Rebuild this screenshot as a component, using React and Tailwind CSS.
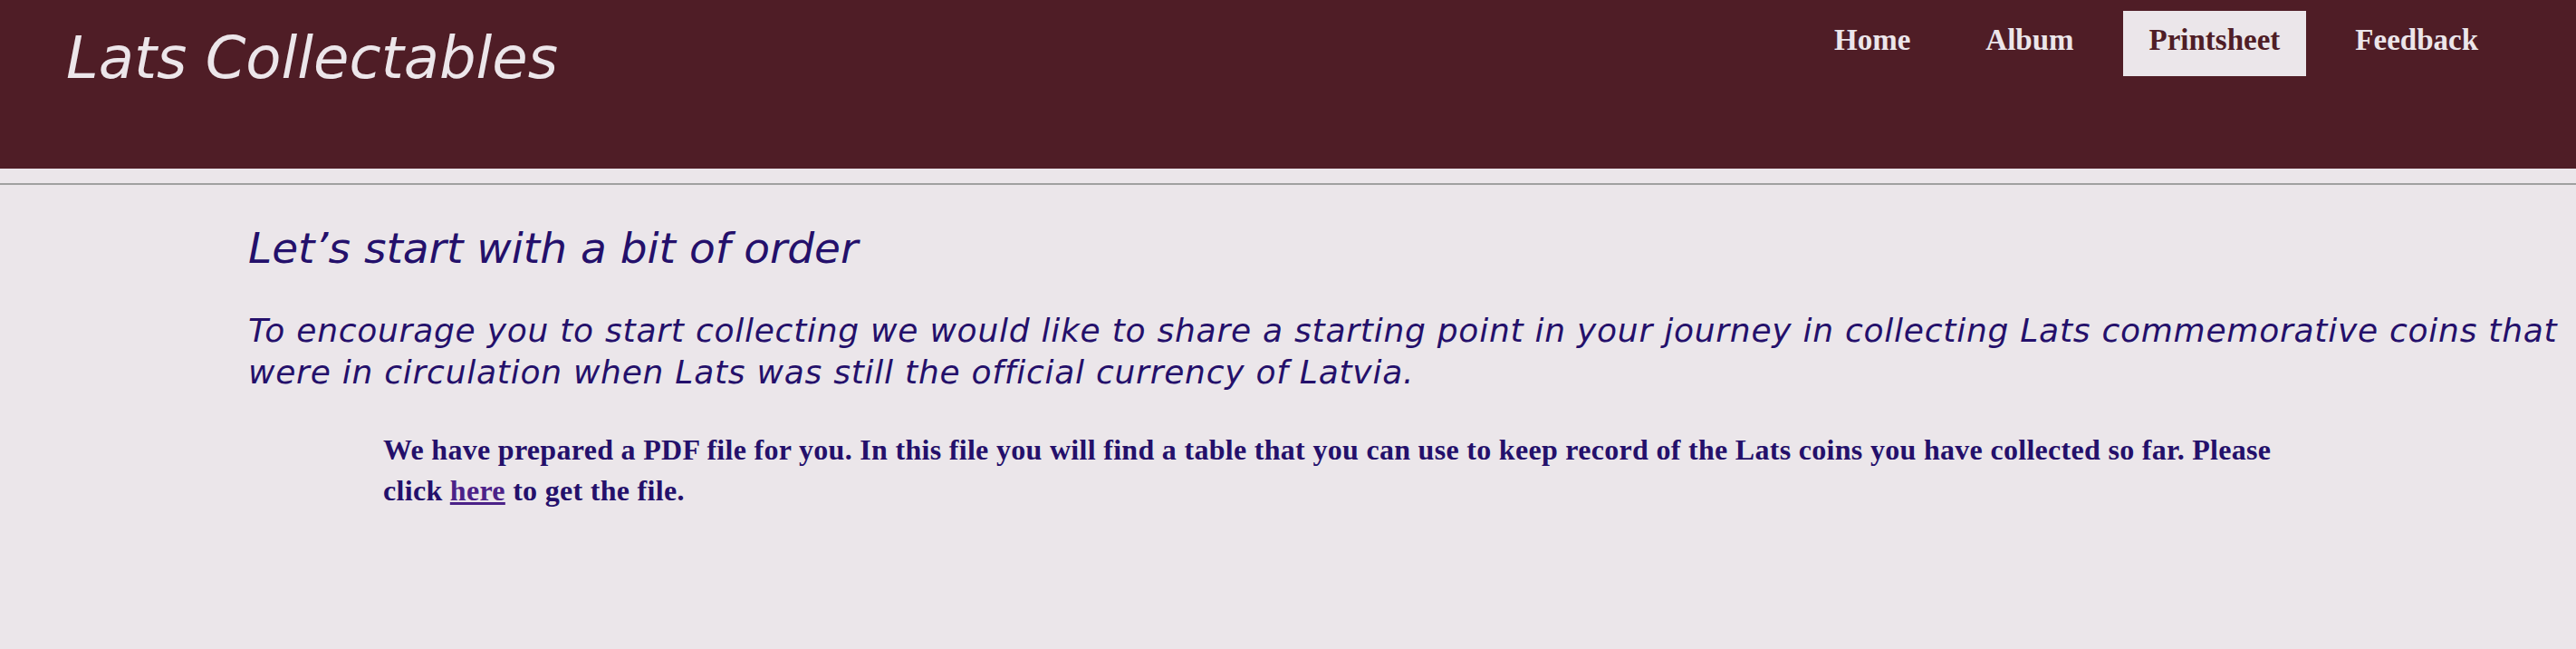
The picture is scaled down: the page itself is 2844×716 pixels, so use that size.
const navItems = ['Home', 'Album', 'Printsheet', 'Feedback'];

const NavLink = ({ label, active = false }) => {
  return (
    <a
      href="#"
      className={`
        block h-[72px] px-[29px] pt-[12px] leading-[40px] text-[33px] font-bold
        ${active ? 'bg-[#ebe6ea] text-[#4f1d26]' : 'text-[#ece6ea]'}
      `}
    >
      {label}
    </a>
  );
};

const Header = () => {
  return (
    <header className="flex h-[186px] justify-between bg-[#4f1d26]">
      <h1 className="pl-[73px] pt-[32px] text-[64px] leading-none italic font-normal text-[#ece6ea] font-['DejaVu_Sans',sans-serif]">
        Lats Collectables
      </h1>
      <nav className="flex gap-[25px] pr-[79px] pt-[12px] font-['Liberation_Serif',serif]">
        {navItems.map((item) => (
          <NavLink key={item} label={item} active={item === 'Printsheet'} />
        ))}
      </nav>
    </header>
  );
};

export default function App() {
  return (
    <div className="min-h-[716px] bg-[#ebe6ea]">
      <Header />
      <hr className="mt-[16px] border-0 border-t-2 border-[#a0a0a0]" />
      <main className="pl-[274px] text-[#24106b]">
        <h2 className="mt-[40px] text-[47px] leading-[59px] italic font-normal font-['DejaVu_Sans',sans-serif]">
          Let’s start with a bit of order
        </h2>
        <p className="mt-[39px] text-[36px] leading-[46px] tracking-[0.75px] italic font-['DejaVu_Sans',sans-serif] whitespace-nowrap">
          To encourage you to start collecting we would like to share a starting point in your journey in collecting Lats commemorative coins that
          <br />
          were in circulation when Lats was still the official currency of Latvia.
        </p>
        <p className="mt-[40px] pl-[149px] text-[32px] leading-[45px] tracking-[0.3px] font-bold font-['Liberation_Serif',serif] whitespace-nowrap">
          We have prepared a PDF file for you. In this file you will find a table that you can use to keep record of the Lats coins you have collected so far. Please
          <br />
          click <a href="#" className="text-[#4b2288] underline">here</a> to get the file.
        </p>
      </main>
    </div>
  );
}
